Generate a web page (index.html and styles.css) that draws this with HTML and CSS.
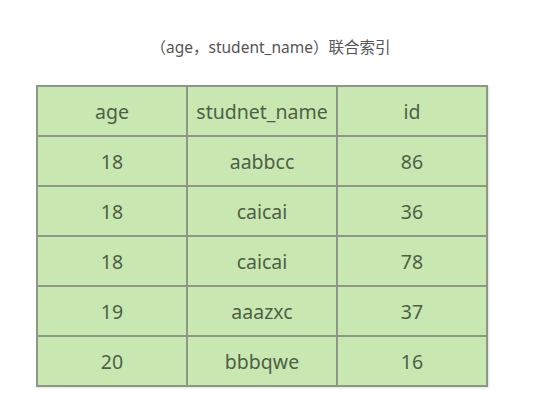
FILE: index.html
```html
<!DOCTYPE html>
<html>
<head>
<meta charset="utf-8">
<link rel="stylesheet" href="styles.css">
</head>
<body>
<div class="page">
  <div class="title">（age，student_name）联合索引</div>
  <table class="grid">
    <tr><td>age</td><td>studnet_name</td><td>id</td></tr>
    <tr><td>18</td><td>aabbcc</td><td>86</td></tr>
    <tr><td>18</td><td>caicai</td><td>36</td></tr>
    <tr><td>18</td><td>caicai</td><td>78</td></tr>
    <tr><td>19</td><td>aaazxc</td><td>37</td></tr>
    <tr><td>20</td><td>bbbqwe</td><td>16</td></tr>
  </table>
</div>
</body>
</html>
```
FILE: styles.css
```css
html, body {
  margin: 0;
  padding: 0;
  background: #ffffff;
}
.page {
  width: 537px;
  height: 414px;
  padding-top: 36px;
  box-sizing: border-box;
}
.title {
  text-align: center;
  padding-left: 4px;
  font-family: "Noto Sans", "Noto Sans CJK SC", sans-serif;
  font-size: 15.5px;
  line-height: 22px;
  color: #555555;
  margin-bottom: 27px;
}
.grid {
  margin-left: 36px;
  border-collapse: collapse;
  background: #c9e8b1;
  box-shadow: 1px 1px 2px rgba(0,0,0,0.12);
}
.grid td {
  width: 148px;
  height: 48px;
  padding: 0;
  border: 2px solid #8c9885;
  text-align: center;
  vertical-align: middle;
  font-family: "Noto Sans", sans-serif;
  font-size: 19.5px;
  color: #4f5f47;
}
```
